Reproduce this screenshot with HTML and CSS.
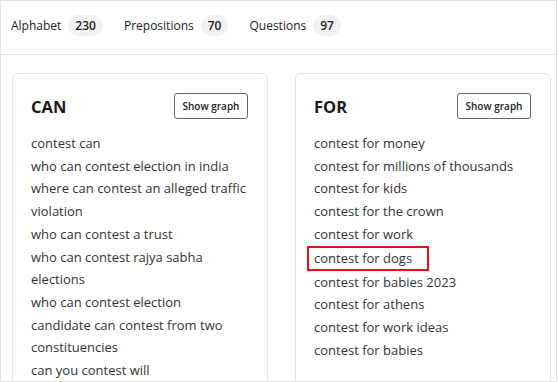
FILE: index.html
```html
<!DOCTYPE html>
<html lang="en">
<head>
    <meta charset="UTF-8">
    <meta name="viewport" content="width=device-width, initial-scale=1.0">
    <title>Contest - Prepositions</title>
    <link rel="stylesheet" href="styles.css">
</head>
<body>
    <div class="frame">
        <div class="tabs">
            <div class="tab">Alphabet <span class="count">230</span></div>
            <div class="tab">Prepositions <span class="count">70</span></div>
            <div class="tab">Questions <span class="count">97</span></div>
        </div>

        <div class="cards">
            <div class="card">
                <div class="card-head">
                    <h2>CAN</h2>
                    <button class="btn-graph">Show graph</button>
                </div>
                <ul class="terms">
                    <li>contest can</li>
                    <li>who can contest election in india</li>
                    <li>where can contest an alleged traffic violation</li>
                    <li>who can contest a trust</li>
                    <li>who can contest rajya sabha elections</li>
                    <li>who can contest election</li>
                    <li>candidate can contest from two constituencies</li>
                    <li>can you contest will</li>
                </ul>
            </div>
            <div class="card">
                <div class="card-head">
                    <h2>FOR</h2>
                    <button class="btn-graph">Show graph</button>
                </div>
                <ul class="terms">
                    <li>contest for money</li>
                    <li>contest for millions of thousands</li>
                    <li>contest for kids</li>
                    <li>contest for the crown</li>
                    <li>contest for work</li>
                    <li><span class="marked">contest for dogs</span></li>
                    <li>contest for babies 2023</li>
                    <li>contest for athens</li>
                    <li>contest for work ideas</li>
                    <li>contest for babies</li>
                </ul>
            </div>
        </div>
    </div>
</body>
</html>
```

FILE: styles.css
```css
body {
    margin: 0;
    font-family: 'Open Sans', sans-serif;
    color: #333;
    background: white;
}
.frame {
    width: 557px;
    height: 382px;
    box-sizing: border-box;
    border: 1px solid #e2e2e2;
    overflow: hidden;
}
.tabs {
    display: flex;
    align-items: center;
    gap: 21px;
    height: 54px;
    box-sizing: border-box;
    padding: 0 0 5px 10px;
    border-bottom: 1px solid #e6e6e6;
}
.tab {
    display: flex;
    align-items: center;
    gap: 7px;
    font-size: 12px;
    color: #222;
}
.count {
    background: #f1f1f1;
    border-radius: 11px;
    padding: 0 7px;
    height: 21px;
    line-height: 21px;
    font-size: 12px;
    font-weight: 600;
}
.cards {
    display: flex;
    gap: 27px;
    padding: 18px 0 0 11px;
}
.card {
    width: 256px;
    height: 340px;
    box-sizing: border-box;
    border: 1px solid #e6e6e6;
    border-radius: 6px;
    padding: 19px 19px 0 18px;
}
.card-head {
    display: flex;
    justify-content: space-between;
    align-items: center;
    margin-bottom: 13px;
}
.card-head h2 {
    margin: 0;
    font-size: 16.5px;
    font-weight: 700;
    color: #1a1a1a;
}
.btn-graph {
    width: 74px;
    height: 26px;
    padding: 0;
    background: white;
    border: 1px solid #666;
    border-radius: 3px;
    font-family: inherit;
    font-size: 10px;
    font-weight: 600;
    color: #222;
}
.terms {
    list-style: none;
    margin: 0;
    padding: 0;
    font-size: 13px;
    line-height: 22.7px;
}
.marked {
    display: inline-block;
    line-height: 21px;
    padding: 0 15px 0 5px;
    margin: 0 -17px 0 -7px;
    border: 2px solid #e8101a;
}
```
